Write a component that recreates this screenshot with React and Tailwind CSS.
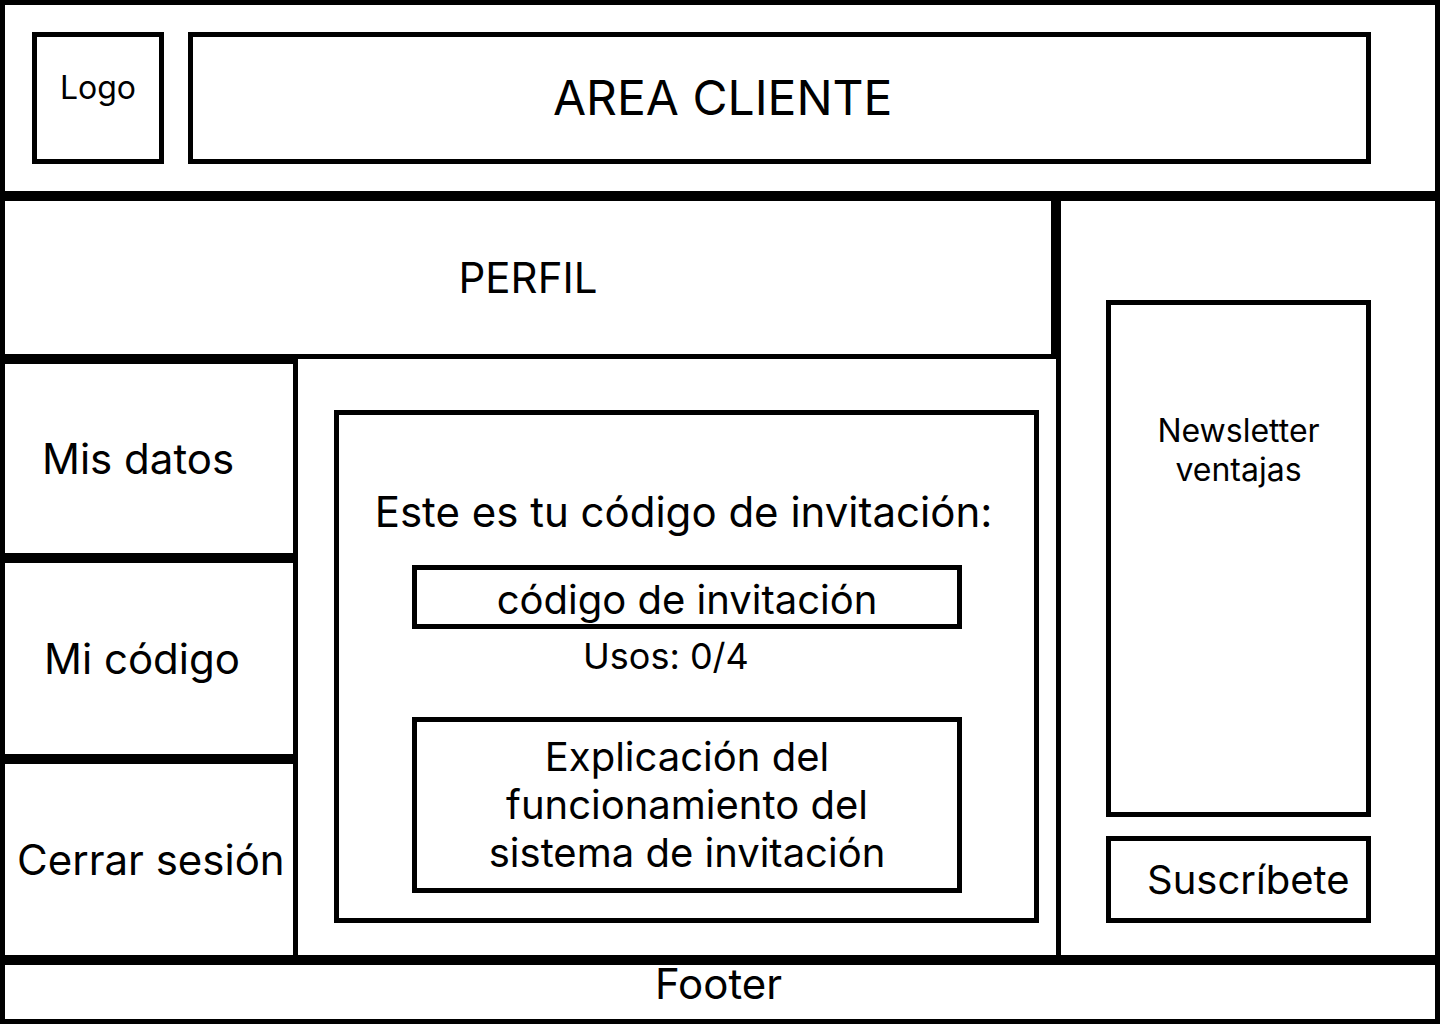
import React from 'react';

const navItems = [
  { label: 'Mis datos', h: 'h-[199px]', pl: 'pl-[37px]' },
  { label: 'Mi código', h: 'h-[201px]', pl: 'pl-[39px]' },
  { label: 'Cerrar sesión', h: 'h-[201px]', pl: 'pl-[12px]' },
];

export default function App() {
  return (
    <div className="w-[1440px] h-[1024px] border-[5px] border-black bg-white text-black flex flex-col font-['Inter',sans-serif] overflow-hidden">
      {/* header */}
      <header className="h-[191px] border-b-[5px] border-black flex items-start pt-[27px] pl-[27px] gap-[24px]">
        <div className="w-[132px] h-[132px] border-[5px] border-black flex justify-center pt-[31px]">
          <span className="text-[32px] leading-[39px]">Logo</span>
        </div>
        <div className="w-[1183px] h-[132px] border-[5px] border-black flex items-center pl-[360px]">
          <span className="text-[48px] leading-[48px] whitespace-nowrap">AREA CLIENTE</span>
        </div>
      </header>

      {/* middle */}
      <div className="h-[764px] flex">
        <div className="w-[1051px] flex flex-col">
          <div className="h-[163px] border-t-[5px] border-b-[5px] border-r-[5px] border-black flex items-center justify-center">
            <span className="text-[42px] leading-[50px]">PERFIL</span>
          </div>
          <div className="h-[601px] flex">
            <nav className="w-[293px] flex flex-col">
              {navItems.map(item => (
                <div
                  key={item.label}
                  className={`${item.h} ${item.pl} border-t-[5px] border-b-[5px] border-r-[5px] border-black flex items-center`}
                >
                  <span className="text-[42px] leading-[50px] whitespace-nowrap">{item.label}</span>
                </div>
              ))}
            </nav>
            <main className="w-[758px] border-b-[5px] border-black pt-[51px] pl-[36px]">
              <div className="w-[705px] h-[513px] border-[5px] border-black flex flex-col">
                <p className="mt-[72px] pr-[6px] text-center text-[42px] leading-[50px] whitespace-nowrap">
                  Este es tu código de invitación:
                </p>
                <div className="mt-[28px] ml-[73px] w-[550px] h-[64px] border-[5px] border-black flex justify-center pt-[6px]">
                  <span className="text-[40px] leading-[48px] whitespace-nowrap">código de invitación</span>
                </div>
                <p className="mt-[5px] pl-[244px] text-[36px] leading-[44px]">Usos: 0/4</p>
                <div className="mt-[39px] ml-[73px] w-[550px] h-[176px] border-[5px] border-black flex justify-center pt-[11px]">
                  <p className="text-center text-[40px] leading-[48px]">
                    Explicación del<br />funcionamiento del<br />sistema de invitación
                  </p>
                </div>
              </div>
            </main>
          </div>
        </div>

        <aside className="w-[379px] border-t-[5px] border-l-[5px] border-b-[5px] border-black pt-[99px] pl-[45px] flex flex-col">
          <div className="w-[265px] h-[517px] border-[5px] border-black flex justify-center pt-[106px]">
            <p className="text-center text-[32px] leading-[39px]">
              Newsletter<br />ventajas
            </p>
          </div>
          <div className="mt-[19px] w-[265px] h-[87px] border-[5px] border-black flex items-center pl-[36px]">
            <span className="text-[40px] leading-[48px]">Suscríbete</span>
          </div>
        </aside>
      </div>

      {/* footer */}
      <footer className="h-[59px] border-t-[5px] border-black flex justify-center pt-[3px]">
        <span className="text-[42px] leading-[32px] -ml-[3px]">Footer</span>
      </footer>
    </div>
  );
}
